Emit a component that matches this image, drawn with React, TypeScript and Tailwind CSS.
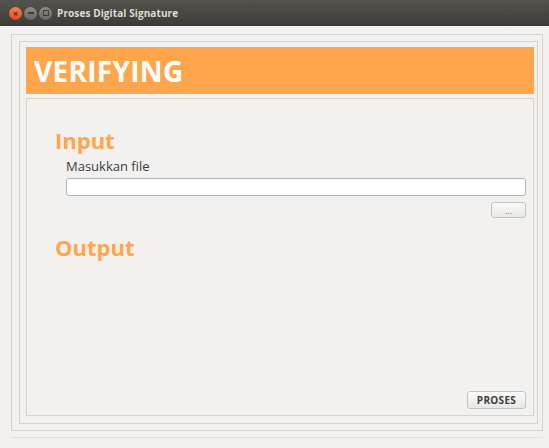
export default function App() {
  return (
    <div className="flex h-[448px] w-[549px] flex-col overflow-hidden bg-[#f2f1f0] font-['Open_Sans',sans-serif]">
      {/* window title bar */}
      <div className="flex h-[26px] items-center bg-gradient-to-b from-[#55534d] to-[#3c3b37] pl-[9px]">
        <div className="flex items-center gap-[2px]">
          <span className="flex h-[13px] w-[13px] items-center justify-center rounded-full bg-gradient-to-b from-[#f58058] to-[#df4a16] text-[9px] leading-none font-bold text-[#5a1a05]">
            ×
          </span>
          <span className="flex h-[13px] w-[13px] items-center justify-center rounded-full bg-gradient-to-b from-[#8e8c86] to-[#6a6863]">
            <span className="h-[2px] w-[6px] bg-[#3c3b37]" />
          </span>
          <span className="flex h-[13px] w-[13px] items-center justify-center rounded-full bg-gradient-to-b from-[#8e8c86] to-[#6a6863]">
            <span className="h-[6px] w-[6px] border border-[#3c3b37]" />
          </span>
        </div>
        <span className="ml-[5px] text-[10px] font-bold tracking-[0.1px] text-[#dfdbd2]">
          Proses Digital Signature
        </span>
      </div>

      {/* window content */}
      <div className="pl-[11px] pr-[6px] pt-[8px]">
        <div className="h-[397px] border border-[#d4d3d0] pb-[6px] pl-[7px] pr-[4px] pt-[6px]">
          <div className="flex h-full flex-col border border-[#d4d3d0] pb-[7px] pl-[6px] pr-[3px] pt-[5px]">
            <div className="flex h-[47px] items-center bg-[#ffa64d] pl-[8px]">
              <h1 className="text-[28px] leading-none font-bold tracking-[0.3px] text-white">VERIFYING</h1>
            </div>

            <div className="mt-[4px] flex flex-1 flex-col border border-[#d4d3d0] pb-[6px] pl-[28px] pr-[7px] pt-[27px]">
              <h2 className="text-[22px] leading-[28px] font-bold text-[#ffa64d]">Input</h2>
              <div className="pl-[11px]">
                <div className="mt-[3px] text-[13px] leading-[18px] text-[#3c3c3c]">Masukkan file</div>
                <input
                  type="text"
                  className="mt-[3px] block h-[18px] w-full rounded-[3px] border border-[#b5b4b1] bg-white px-1 text-[12px] outline-none"
                />
                <div className="mt-[6px] flex justify-end">
                  <button className="h-[16px] w-[35px] rounded-[3px] border border-[#c4c3c0] bg-gradient-to-b from-[#fbfbfa] to-[#e8e7e5] text-[9px] leading-none text-[#777]">
                    ...
                  </button>
                </div>
              </div>
              <h2 className="mt-[15px] text-[22px] leading-[28px] font-bold text-[#ffa64d]">Output</h2>

              <div className="mt-auto flex justify-end">
                <button className="h-[18px] w-[59px] rounded-[3px] border border-[#c4c3c0] bg-gradient-to-b from-[#fbfbfa] to-[#e8e7e5] text-[10px] leading-none font-bold tracking-[0.3px] text-[#3c3c3c]">
                  PROSES
                </button>
              </div>
            </div>
          </div>
        </div>
        <div className="mt-[6px] border-t border-[#e0dfdc]" />
      </div>
    </div>
  );
}
